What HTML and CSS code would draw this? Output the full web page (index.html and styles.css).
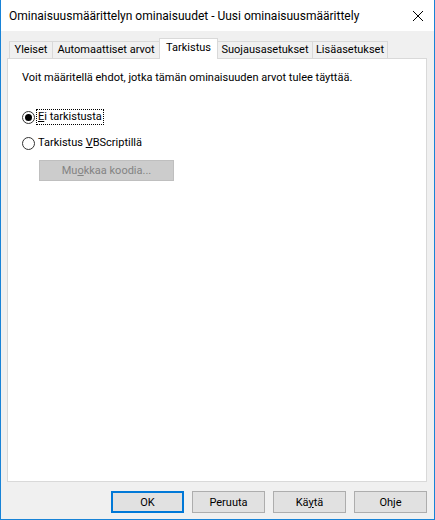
FILE: index.html
```
<!DOCTYPE html>
<html lang="fi">
<head>
    <meta charset="UTF-8">
    <meta name="viewport" content="width=device-width, initial-scale=1.0">
    <title>Ominaisuusmäärittelyn ominaisuudet</title>
    <link rel="stylesheet" href="styles.css">
</head>
<body>
    <div class="window">
        <div class="titlebar">
            <span class="title">Ominaisuusmäärittelyn ominaisuudet - Uusi ominaisuusmäärittely</span>
            <svg class="close" width="12" height="12" viewBox="0 0 12 12">
                <path d="M1 1 L11 11 M11 1 L1 11" stroke="#000" stroke-width="1" fill="none"/>
            </svg>
        </div>
        <div class="content">
            <div class="tabs">
                <div class="tab t1">Yleiset</div>
                <div class="tab t2">Automaattiset arvot</div>
                <div class="tab t3 active">Tarkistus</div>
                <div class="tab t4">Suojausasetukset</div>
                <div class="tab t5">Lisäasetukset</div>
            </div>
            <div class="panel">
                <p class="intro">Voit määritellä ehdot, jotka tämän ominaisuuden arvot tulee täyttää.</p>
                <label class="radio">
                    <span class="dot checked"></span>
                    <span class="label focus"><u>E</u>i tarkistusta</span>
                </label>
                <label class="radio">
                    <span class="dot"></span>
                    <span class="label">Tarkistus <u>V</u>BScriptillä</span>
                </label>
                <button class="edit-button" disabled>Mu<u>o</u>kkaa koodia...</button>
            </div>
            <div class="buttons">
                <button class="btn default">OK</button>
                <button class="btn">Peruuta</button>
                <button class="btn">Kä<u>y</u>tä</button>
                <button class="btn">Ohje</button>
            </div>
        </div>
    </div>
</body>
</html>
```
FILE: styles.css
```
body { margin: 0; font-family: Roboto, "Noto Sans", sans-serif; font-size: 11px; color: #000; }
.window { width: 433px; height: 519px; background: #f0f0f0; border: 1px solid #1883d7; border-top: none; }
.titlebar { height: 31px; background: #fff; display: flex; align-items: center; justify-content: space-between; padding: 0 10px 0 8px; }
.title { font-size: 12px; }
.close { margin-top: 1px; }
.content { padding: 7px 7px 0 6px; }
.tabs { display: flex; align-items: flex-end; height: 20px; padding-left: 2px; }
.tab { box-sizing: border-box; height: 17px; line-height: 16px; text-align: center; white-space: nowrap; border: 1px solid #d9d9d9; border-bottom: none; margin-left: -1px; background: #f0f0f0; }
.tab.t1 { margin-left: 0; width: 44px; }
.tab.t2 { width: 108px; }
.tab.t3 { width: 59px; }
.tab.t4 { width: 96px; }
.tab.t5 { width: 76px; }
.tab.active { height: 21px; line-height: 17px; background: #fff; margin-bottom: -1px; position: relative; z-index: 1; }
.panel { height: 422px; background: #fff; border: 1px solid #d9d9d9; padding: 0 14px; }
.intro { margin: 11px 0 24px 0; line-height: 15px; }
.radio { display: flex; align-items: center; height: 16px; margin-bottom: 10px; }
.dot { width: 11px; height: 11px; border: 1px solid #333; border-radius: 50%; display: flex; align-items: center; justify-content: center; margin-right: 2px; }
.dot.checked::after { content: ""; width: 7px; height: 7px; border-radius: 50%; background: #000; }
.label { padding: 0 1px; line-height: 14px; }
.label.focus { outline: 1px dotted #000; }
.edit-button { display: block; margin: -1px 0 0 17px; width: 135px; height: 21px; background: #ccc; border: 1px solid #bfbfbf; color: #838383; font-family: inherit; font-size: 11px; padding: 0; }
.buttons { display: flex; justify-content: flex-end; gap: 8px; margin-top: 9px; }
.btn { width: 73px; height: 22px; background: #e1e1e1; border: 1px solid #adadad; font-family: inherit; font-size: 11px; padding: 0; color: #000; }
.btn.default { border: 2px solid #0078d7; }
```
